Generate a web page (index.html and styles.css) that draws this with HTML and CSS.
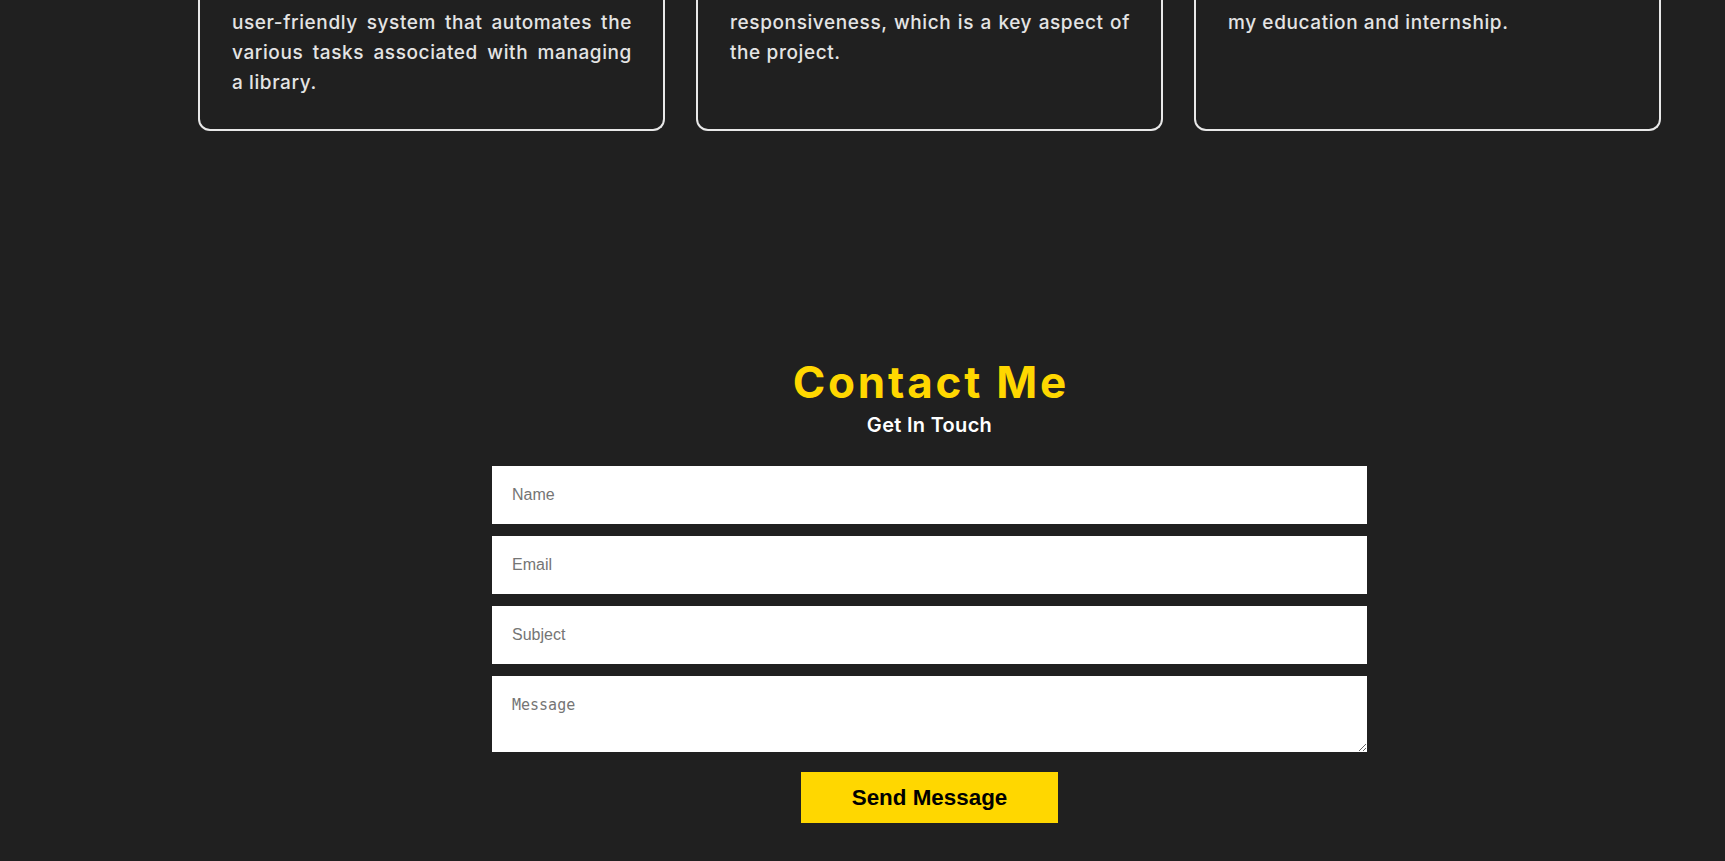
FILE: index.html
```html
<!DOCTYPE html>
<html lang="en">
<head>
<meta charset="utf-8">
<title>Portfolio</title>
<link rel="stylesheet" href="styles.css">
</head>
<body>
<main class="main">
  <section class="projects">
    <div class="card"><p>user-friendly system that automates the various tasks associated with managing a library.</p></div>
    <div class="card"><p>responsiveness, which is a key aspect of the project.</p></div>
    <div class="card"><p>my education and internship.</p></div>
  </section>
  <section class="contact">
    <h2 class="contact-title">Contact Me</h2>
    <p class="contact-sub">Get In Touch</p>
    <form class="form">
      <input class="field" type="text" placeholder="Name">
      <input class="field" type="email" placeholder="Email">
      <input class="field" type="text" placeholder="Subject">
      <textarea class="field area" placeholder="Message"></textarea>
      <button class="send" type="button">Send Message</button>
    </form>
  </section>
</main>
</body>
</html>
```
FILE: styles.css
```css
* { box-sizing: border-box; }
html, body { margin: 0; padding: 0; }
body {
  background: #202020;
  font-family: "Inter", "Open Sans", sans-serif;
  color: #e6e6e6;
  height: 861px;
  overflow: hidden;
}
.main {
  padding-left: 134px;
}
.projects {
  display: grid;
  grid-template-columns: repeat(3, 1fr);
  gap: 31px;
  padding: 0 64px;
}
.card {
  border: 2px solid #e8e8e8;
  border-top: 0;
  border-radius: 0 0 12px 12px;
  padding: 8px 31px 31px 32px;
}
.card p {
  margin: 0;
  font-size: 19px;
  line-height: 30px;
  font-weight: 500;
  letter-spacing: 0.6px;
  text-align: justify;
  color: #e4e4e4;
}
.contact {
  display: flex;
  flex-direction: column;
  align-items: center;
  padding-top: 226px;
}
.contact-title {
  margin: 0;
  font-size: 44px;
  line-height: 50px;
  font-weight: 700;
  color: #ffd700;
  letter-spacing: 2.8px;
  text-indent: 2.8px;
}
.contact-sub {
  margin: 5px 0 0;
  font-size: 20px;
  line-height: 26px;
  font-weight: 600;
  letter-spacing: 0.3px;
  color: #ffffff;
}
.form {
  width: 875px;
  margin-top: 28px;
  display: flex;
  flex-direction: column;
  align-items: center;
}
.field {
  display: block;
  width: 100%;
  height: 58px;
  margin: 0 0 12px;
  padding: 0 20px;
  border: 0;
  background: #ffffff;
  font-family: "Liberation Sans", Arial, sans-serif;
  font-size: 16px;
  color: #222;
  outline: none;
}
.field::placeholder { color: #757575; }
.area {
  height: 76px;
  margin-bottom: 20px;
  padding: 20px 20px;
  font-family: "DejaVu Sans Mono", monospace;
  font-size: 15px;
  resize: vertical;
}
.send {
  width: 257px;
  height: 51px;
  border: 0;
  background: #ffd700;
  color: #000;
  font-family: "Liberation Sans", Arial, sans-serif;
  font-weight: 700;
  font-size: 22.4px;
  cursor: pointer;
}
```
